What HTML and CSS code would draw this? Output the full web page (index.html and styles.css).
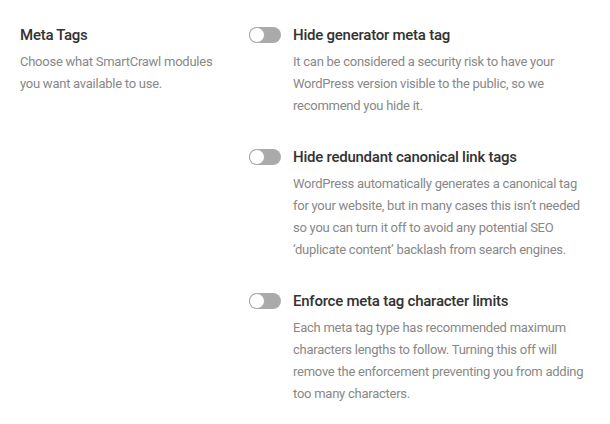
FILE: index.html
```html
<!DOCTYPE html>
<html>
<head>
<meta charset="utf-8">
<link rel="stylesheet" href="styles.css">
</head>
<body>
<div class="box">
  <div class="side">
    <h3 class="side-title">Meta Tags</h3>
    <p class="side-desc">Choose what SmartCrawl modules you want available to use.</p>
  </div>
  <div class="options">
    <div class="option">
      <span class="toggle"><span class="knob"></span></span>
      <div class="opt-body">
        <div class="opt-title">Hide generator meta tag</div>
        <p class="opt-desc">It can be considered a security risk to have your WordPress version visible to the public, so we recommend you hide it.</p>
      </div>
    </div>
    <div class="option">
      <span class="toggle"><span class="knob"></span></span>
      <div class="opt-body">
        <div class="opt-title">Hide redundant canonical link tags</div>
        <p class="opt-desc">WordPress automatically generates a canonical tag for your website, but in many cases this isn’t needed so you can turn it off to avoid any potential SEO ‘duplicate content’ backlash from search engines.</p>
      </div>
    </div>
    <div class="option">
      <span class="toggle"><span class="knob"></span></span>
      <div class="opt-body">
        <div class="opt-title">Enforce meta tag character limits</div>
        <p class="opt-desc">Each meta tag type has recommended maximum characters lengths to follow. Turning this off will remove the enforcement preventing you from adding too many characters.</p>
      </div>
    </div>
  </div>
</div>
</body>
</html>
```

FILE: styles.css
```css
html, body {
  margin: 0;
  padding: 0;
  background: #ffffff;
}
body {
  font-family: Roboto, "Liberation Sans", Arial, sans-serif;
  letter-spacing: -0.25px;
}
.box {
  display: flex;
  padding: 24px 0 0 20px;
}
.side {
  width: 229px;
  flex: none;
}
.side-title {
  margin: 0;
  font-family: "Roboto Medium", Roboto, "Liberation Sans", Arial, sans-serif;
  font-size: 15px;
  line-height: 22px;
  font-weight: 500;
  color: #333333;
}
.side-desc {
  margin: 5px 0 0;
  width: 200px;
  font-size: 13px;
  line-height: 22px;
  color: #888888;
}
.options {
  display: flex;
  flex-direction: column;
  gap: 29px;
}
.option {
  display: flex;
  gap: 12px;
}
.toggle {
  flex: none;
  width: 32px;
  height: 16px;
  margin-top: 3px;
  border-radius: 8px;
  background: #aaaaaa;
  position: relative;
}
.knob {
  position: absolute;
  left: 0;
  top: 0;
  width: 14px;
  height: 14px;
  border-radius: 50%;
  background: #ffffff;
  border: 1px solid #aaaaaa;
}
.opt-body {
  width: 300px;
}
.opt-title {
  font-family: "Roboto Medium", Roboto, "Liberation Sans", Arial, sans-serif;
  font-size: 15px;
  line-height: 22px;
  font-weight: 500;
  color: #333333;
}
.opt-desc {
  margin: 5px 0 0;
  font-size: 13px;
  line-height: 22px;
  color: #888888;
}
```
